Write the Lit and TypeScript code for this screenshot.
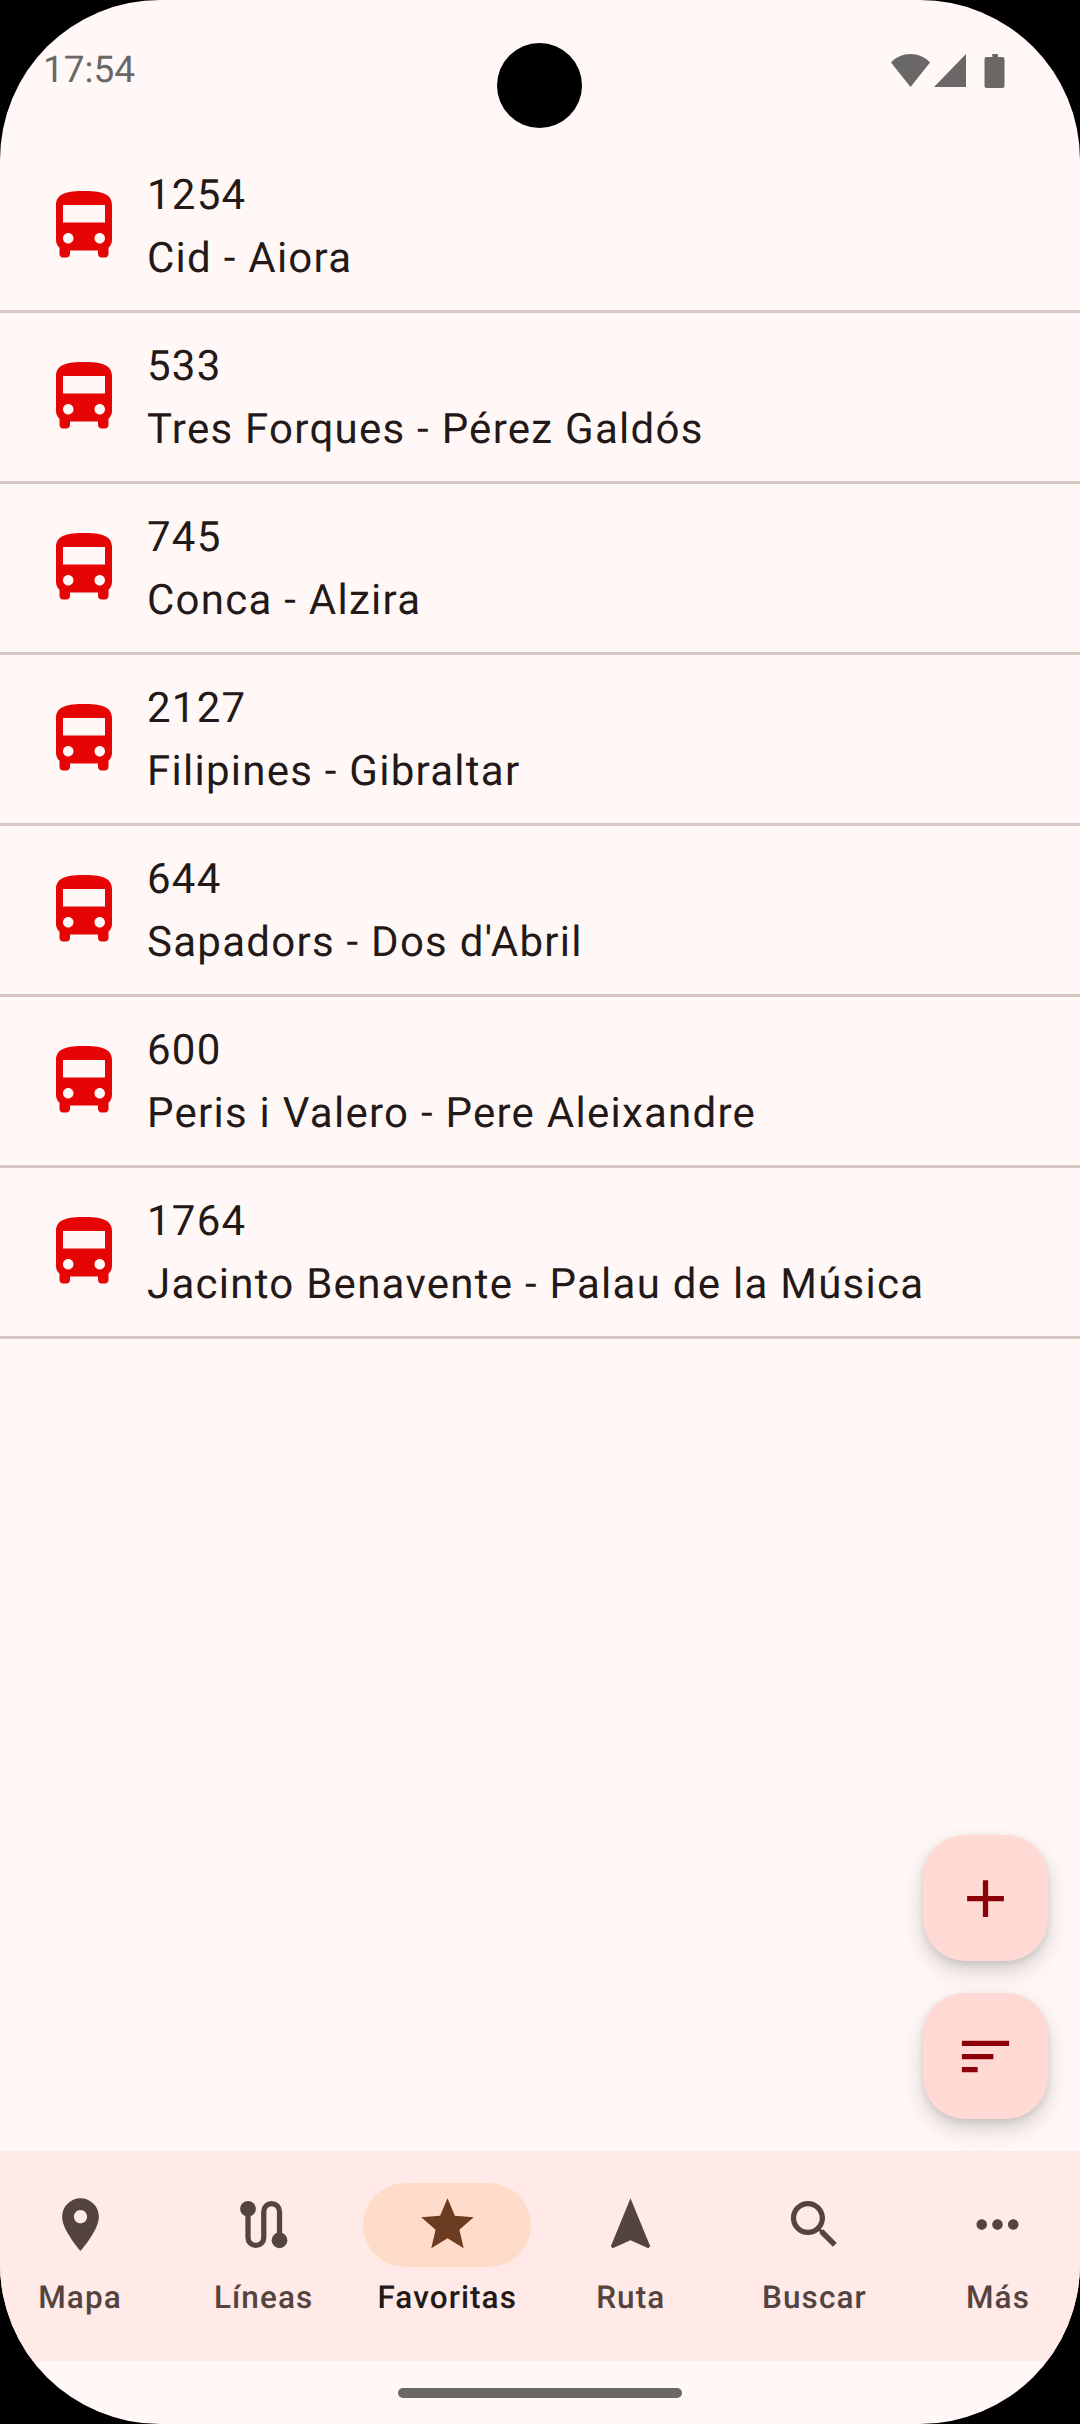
import { LitElement, html, css, svg } from "lit";
import { customElement } from "lit/decorators.js";

const STOPS = [
  ["1254", "Cid - Aiora"],
  ["533", "Tres Forques - Pérez Galdós"],
  ["745", "Conca - Alzira"],
  ["2127", "Filipines - Gibraltar"],
  ["644", "Sapadors - Dos d'Abril"],
  ["600", "Peris i Valero - Pere Aleixandre"],
  ["1764", "Jacinto Benavente - Palau de la Música"],
];

const BUS =
  "M4 16c0 .88.39 1.67 1 2.22V20c0 .55.45 1 1 1h1c.55 0 1-.45 1-1v-1h8v1c0 .55.45 1 1 1h1c.55 0 1-.45 1-1v-1.78c.61-.55 1-1.34 1-2.22V6c0-3.5-3.58-4-8-4s-8 .5-8 4v10zm3.5 1c-.83 0-1.5-.67-1.5-1.5S6.67 14 7.5 14s1.5.67 1.5 1.5S8.33 17 7.5 17zm9 0c-.83 0-1.5-.67-1.5-1.5s.67-1.5 1.5-1.5 1.5.67 1.5 1.5-.67 1.5-1.5 1.5zm1.5-6H6V6h12v5z";

const NAV = [
  {
    label: "Mapa",
    icon: svg`<path d="M12 2C8.13 2 5 5.13 5 9c0 5.25 7 13 7 13s7-7.75 7-13c0-3.87-3.13-7-7-7zm0 9.5c-1.38 0-2.5-1.12-2.5-2.5s1.12-2.5 2.5-2.5 2.5 1.12 2.5 2.5-1.12 2.5-2.5 2.5z"/>`,
  },
  {
    label: "Líneas",
    icon: svg`<circle cx="6.1" cy="6" r="3"/><circle cx="18.1" cy="18" r="3"/><path d="M6.1 6v11a3 3 0 0 0 6 0V7a3 3 0 0 1 6 0v11" fill="none" stroke="currentColor" stroke-width="2"/>`,
  },
  {
    label: "Favoritas",
    active: true,
    icon: svg`<path d="M12 17.27 18.18 21l-1.64-7.03L22 9.24l-7.19-.61L12 2 9.19 8.63 2 9.24l5.46 4.73L5.82 21z"/>`,
  },
  {
    label: "Ruta",
    icon: svg`<path d="M12 2 4.5 20.29l.71.71L12 18l6.79 3 .71-.71z"/>`,
  },
  {
    label: "Buscar",
    icon: svg`<path d="M15.5 14h-.79l-.28-.27C15.41 12.59 16 11.11 16 9.5 16 5.91 13.09 3 9.5 3S3 5.91 3 9.5 5.91 16 9.5 16c1.61 0 3.09-.59 4.23-1.57l.27.28v.79l5 4.99L20.49 19l-4.99-5zm-6 0C7.01 14 5 11.99 5 9.5S7.01 5 9.5 5 14 7.01 14 9.5 11.99 14 9.5 14z"/>`,
  },
  {
    label: "Más",
    icon: svg`<path d="M6 10c-1.1 0-2 .9-2 2s.9 2 2 2 2-.9 2-2-.9-2-2-2zm12 0c-1.1 0-2 .9-2 2s.9 2 2 2 2-.9 2-2-.9-2-2-2zm-6 0c-1.1 0-2 .9-2 2s.9 2 2 2 2-.9 2-2-.9-2-2-2z"/>`,
  },
];

@customElement("app-root")
export class AppRoot extends LitElement {
  static styles = css`
    :host {
      display: block;
      width: 1080px;
      height: 2424px;
      background: #000;
      font-family: Roboto, "Noto Sans", sans-serif;
      text-rendering: geometricPrecision;
    }
    .screen {
      position: relative;
      width: 1080px;
      height: 2424px;
      background: #fff8f6;
      border-radius: 160px;
      overflow: hidden;
      display: flex;
      flex-direction: column;
    }
    .status {
      height: 142px;
      flex: none;
      box-sizing: border-box;
      padding: 48px 73px 0 43px;
      display: flex;
      justify-content: space-between;
      align-items: flex-start;
      color: #6a6866;
    }
    .time {
      font-size: 37px;
      line-height: 44px;
      margin-top: 1px;
    }
    .sys {
      width: 116px;
      height: 36px;
      margin-top: 5px;
      fill: currentColor;
    }
    .camera {
      position: absolute;
      left: 497px;
      top: 43px;
      width: 85px;
      height: 85px;
      border-radius: 50%;
      background: #000;
    }
    .list {
      flex: 1;
    }
    .row {
      height: 171px;
      box-sizing: border-box;
      border-bottom: 3px solid #d8c7c3;
      display: flex;
      align-items: center;
      padding-left: 42px;
      gap: 21px;
    }
    .bus {
      width: 84px;
      height: 84px;
      fill: #e60505;
      flex: none;
    }
    .lines {
      font-size: 42px;
      line-height: 63px;
      letter-spacing: 1.26px;
      color: #231918;
      padding-top: 2px;
    }
    .nav {
      height: 210px;
      flex: none;
      background: #ffeae7;
      display: grid;
      grid-template-columns: repeat(6, 183.6px);
      justify-content: center;
      padding-top: 31.5px;
      padding-right: 2px;
      box-sizing: border-box;
    }
    .item {
      display: flex;
      flex-direction: column;
      align-items: center;
      color: #534341;
    }
    .pill {
      width: 168px;
      height: 84px;
      border-radius: 42px;
      display: flex;
      align-items: center;
      justify-content: center;
    }
    .pill svg {
      width: 63px;
      height: 63px;
      fill: currentColor;
    }
    .label {
      margin-top: 10px;
      font-size: 31.5px;
      line-height: 42px;
      font-weight: 500;
      letter-spacing: 1.1px;
    }
    .item.active {
      color: #231918;
    }
    .item.active .pill {
      background: #ffdcc9;
      color: #6b3c20;
    }
    .gesture {
      height: 63px;
      flex: none;
      display: flex;
      align-items: center;
      justify-content: center;
    }
    .handle {
      width: 284px;
      height: 10px;
      border-radius: 5px;
      background: #6a6866;
    }
    .fabs {
      position: absolute;
      right: 32px;
      bottom: 305px;
      display: flex;
      flex-direction: column;
      gap: 32px;
    }
    .fab {
      width: 125px;
      height: 126px;
      border-radius: 42px;
      background: #ffdad5;
      box-shadow: 0 10px 22px rgba(0, 0, 0, 0.17), 0 3px 7px rgba(0, 0, 0, 0.09);
      display: flex;
      align-items: center;
      justify-content: center;
    }
    .fab svg {
      width: 63px;
      height: 63px;
      fill: #8c0009;
    }
  `;

  render() {
    return html`
      <div class="screen">
        <div class="status">
          <span class="time">17:54</span>
          <svg class="sys" viewBox="0 0 116 36">
            <path d="M19.5 34 0 9.5C5 4 12 1 19.5 1S34 4 39 9.5z" />
            <path d="M43 34 75 1v33z" />
            <path d="M101 1h6v3h4.5a2 2 0 0 1 2 2v27a2 2 0 0 1-2 2h-16a2 2 0 0 1-2-2V6a2 2 0 0 1 2-2h6z" />
          </svg>
        </div>
        <div class="camera"></div>
        <div class="list">
          ${STOPS.map(
            ([id, name]) => html`
              <div class="row">
                <svg class="bus" viewBox="0 0 24 24"><path d=${BUS} /></svg>
                <div class="lines">
                  <div>${id}</div>
                  <div>${name}</div>
                </div>
              </div>
            `
          )}
        </div>
        <div class="nav">
          ${NAV.map(
            (n) => html`
              <div class="item ${n.active ? "active" : ""}">
                <div class="pill">
                  <svg viewBox="0 0 24 24">${n.icon}</svg>
                </div>
                <div class="label">${n.label}</div>
              </div>
            `
          )}
        </div>
        <div class="gesture"><div class="handle"></div></div>
        <div class="fabs">
          <div class="fab">
            <svg viewBox="0 0 24 24"><path d="M19 13h-6v6h-2v-6H5v-2h6V5h2v6h6v2z" /></svg>
          </div>
          <div class="fab">
            <svg viewBox="0 0 24 24"><path d="M3 18h6v-2H3v2zM3 6v2h18V6H3zm0 7h12v-2H3v2z" /></svg>
          </div>
        </div>
      </div>
    `;
  }
}
